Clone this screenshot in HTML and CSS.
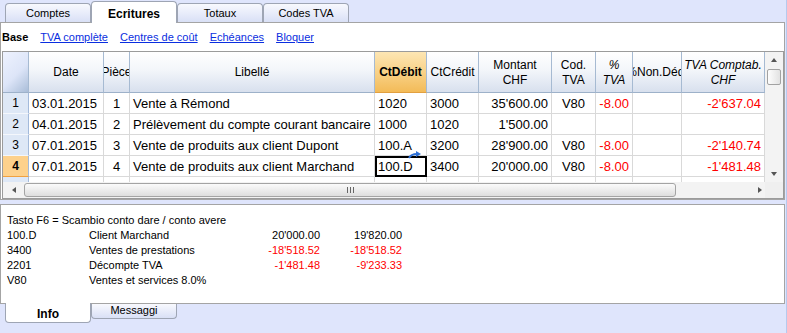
FILE: index.html
```html
<!DOCTYPE html>
<html lang="fr">
<head>
<meta charset="utf-8">
<link rel="stylesheet" href="styles.css">
</head>
<body>
<div class="tabs top">
  <div class="tab">Comptes</div>
  <div class="tab active">Ecritures</div>
  <div class="tab">Totaux</div>
  <div class="tab">Codes TVA</div>
</div>
<div class="panel main">
  <div class="links">
    <b>Base</b><a>TVA complète</a><a>Centres de coût</a><a>Echéances</a><a>Bloquer</a>
  </div>
  <div class="frame">
    <div class="upper">
      <div class="table">
        <div class="row head">
          <div class="h corner-h"></div>
          <div class="h"><span>Date</span></div>
          <div class="h"><span>Pièce</span></div>
          <div class="h"><span>Libellé</span></div>
          <div class="h sel"><span>CtDébit</span></div>
          <div class="h"><span>CtCrédit</span></div>
          <div class="h"><span>Montant<br>CHF</span></div>
          <div class="h"><span>Cod.<br>TVA</span></div>
          <div class="h it"><span>%<br>TVA</span></div>
          <div class="h"><span>%Non.Déd.</span></div>
          <div class="h it"><span>TVA Comptab.<br>CHF</span></div>
        </div>
        <div class="row">
          <div class="c n">1</div><div class="c">03.01.2015</div><div class="c ctr">1</div><div class="c">Vente à Rémond</div><div class="c">1020</div><div class="c">3000</div><div class="c r">35'600.00</div><div class="c ctr">V80</div><div class="c r red">-8.00</div><div class="c"></div><div class="c r red">-2'637.04</div>
        </div>
        <div class="row">
          <div class="c n">2</div><div class="c">04.01.2015</div><div class="c ctr">2</div><div class="c">Prélèvement du compte courant bancaire</div><div class="c">1000</div><div class="c">1020</div><div class="c r">1'500.00</div><div class="c ctr"></div><div class="c r red"></div><div class="c"></div><div class="c r red"></div>
        </div>
        <div class="row">
          <div class="c n">3</div><div class="c">07.01.2015</div><div class="c ctr">3</div><div class="c">Vente de produits aux client Dupont</div><div class="c">100.A</div><div class="c">3200</div><div class="c r">28'900.00</div><div class="c ctr">V80</div><div class="c r red">-8.00</div><div class="c"></div><div class="c r red">-2'140.74</div>
        </div>
        <div class="row">
          <div class="c n cur">4</div><div class="c">07.01.2015</div><div class="c ctr">4</div><div class="c">Vente de produits aux client Marchand</div><div class="c active-cell">100.D<svg class="swap" width="14" height="8" viewBox="0 0 14 8"><path d="M1 7 Q3 3 9 3" stroke="#2c6fd6" stroke-width="2" fill="none"/><path d="M8 0 L13 3 L8 6 Z" fill="#2c6fd6"/></svg></div><div class="c">3400</div><div class="c r">20'000.00</div><div class="c ctr">V80</div><div class="c r red">-8.00</div><div class="c"></div><div class="c r red">-1'481.48</div>
        </div>
        <div class="row partial">
          <div class="c n"></div><div class="c"></div><div class="c"></div><div class="c"></div><div class="c"></div><div class="c"></div><div class="c"></div><div class="c"></div><div class="c"></div><div class="c"></div><div class="c"></div>
        </div>
      </div>
      <div class="vscroll">
        <div class="arr up"></div>
        <div class="vthumb"></div>
        <div class="vspace"></div>
        <div class="arr down"></div>
      </div>
    </div>
    <div class="lower">
      <div class="hscroll">
        <div class="arr left"></div>
        <div class="hthumb"><span class="grip"></span></div>
        <div class="arr right"></div>
      </div>
      <div class="sq"></div>
    </div>
  </div>
</div>
<div class="panel info">
  <div class="iline">Tasto F6 = Scambio conto dare / conto avere</div>
  <div class="iline"><span class="k">100.D</span><span class="d">Client Marchand</span><span class="a">20'000.00</span><span class="a">19'820.00</span></div>
  <div class="iline"><span class="k">3400</span><span class="d">Ventes de prestations</span><span class="a red">-18'518.52</span><span class="a red">-18'518.52</span></div>
  <div class="iline"><span class="k">2201</span><span class="d">Décompte TVA</span><span class="a red">-1'481.48</span><span class="a red">-9'233.33</span></div>
  <div class="iline"><span class="k">V80</span><span class="d">Ventes et services 8.0%</span></div>
</div>
<div class="tabs bottom">
  <div class="tab active">Info</div>
  <div class="tab">Messaggi</div>
</div>
</body>
</html>
```

FILE: styles.css
```css
html, body { margin: 0; padding: 0; }
body {
  width: 786px;
  height: 333px;
  background: #dfe5fc;
  border-right: 1px solid #b5caee;
  font-family: "Liberation Sans", Arial, sans-serif;
  font-size: 11px;
  color: #000;
  overflow: hidden;
}

/* tabs */
.tabs { display: flex; padding-left: 5px; }
.tabs.top { height: 22px; align-items: flex-end; }
.tab {
  width: 86px;
  box-sizing: border-box;
  text-align: center;
  font-size: 11px;
  border: 1px solid #9ea5b4;
  background: linear-gradient(#f8f9fe, #d9e0f6);
  color: #000;
}
.tabs.top .tab {
  height: 19px;
  line-height: 19px;
  border-bottom: none;
  border-radius: 4px 4px 0 0;
}
.tabs.top .tab.active {
  height: 22px;
  line-height: 24px;
  margin-bottom: -1px;
  background: #fff;
  font-weight: bold;
  font-size: 12px;
  position: relative;
  z-index: 1;
}
.tabs.bottom { align-items: flex-start; }
.tabs.bottom .tab {
  height: 15px;
  line-height: 13px;
  border-top: none;
  border-radius: 0 0 4px 4px;
}
.tabs.bottom .tab.active {
  height: 20px;
  line-height: 22px;
  margin-top: -1px;
  background: #fff;
  font-weight: bold;
  font-size: 12px;
  position: relative;
  z-index: 1;
}

/* panels */
.panel {
  width: 785px;
  box-sizing: border-box;
  border: 1px solid #a4a4a4;
  background: #fff;
}
.main { height: 178px; }
.links {
  height: 28px;
  line-height: 28px;
  padding-left: 1px;
  display: flex;
  gap: 12px;
  white-space: nowrap;
}
.links b { font-weight: bold; }
.links a { color: #0a2ee0; text-decoration: underline; }

.frame {
  margin-left: 1px;
  width: 782px;
  height: 148px;
  box-sizing: border-box;
  border: 1px solid #9b9b9b;
  display: flex;
  flex-direction: column;
}
.upper { display: flex; height: 130px; }
.table { width: 762px; overflow: hidden; }
.row {
  display: grid;
  grid-template-columns: 26px 75px 26px 245px 52px 52px 73px 44px 37px 49px 83px;
}
.h {
  box-sizing: border-box;
  height: 41px;
  border-right: 1px solid #a6bad2;
  border-bottom: 1px solid #9db1c9;
  background: linear-gradient(#ffffff 0%, #f3f6fa 45%, #d8e0ee 100%);
  display: flex;
  align-items: center;
  justify-content: center;
  overflow: hidden;
  text-align: center;
  font-size: 12px;
  line-height: 15px;
  white-space: nowrap;
  padding-top: 1px;
}
.h span { flex: none; }
.h.it { font-style: italic; }
.h.sel {
  background: linear-gradient(#fde6b4 0%, #f9d48c 45%, #f3bb58 100%);
  border-bottom-color: #e2a040;
  font-weight: bold;
}
.h.corner-h {
  background: linear-gradient(135deg, #eef2fe 0%, #dde5f8 55%, #a9bdd8 100%);
}

.c {
  box-sizing: border-box;
  height: 21px;
  border-right: 1px solid #d9d9d9;
  border-bottom: 1px solid #d9d9d9;
  padding: 0 3px;
  font-size: 13px;
  line-height: 21px;
  white-space: nowrap;
  overflow: hidden;
}
.c.r { text-align: right; }
.c.ctr { text-align: center; }
.red { color: #ff0000; }
.c.n {
  background: #dee8f6;
  border-right-color: #a3badb;
  border-bottom-color: #f4f7fc;
  text-align: center;
  font-size: 12px;
  padding: 0;
}
.c.n.cur {
  background: #fdd18c;
  font-weight: bold;
  border-bottom: 1px solid #f0a140;
}
.row.partial .c { height: 5px; border-bottom: none; }
.active-cell {
  position: relative;
  overflow: visible;
  outline: 2px solid #000;
  outline-offset: -2px;
}
.swap { position: absolute; left: 33px; top: -5px; }

/* scrollbars */
.vscroll {
  width: 18px;
  background: #f3f3f3;
  display: flex;
  flex-direction: column;
  align-items: center;
}
.arr { width: 0; height: 0; border-style: solid; border-color: transparent; }
.arr.up { margin-top: 6px; border-width: 0 3px 4px 3px; border-bottom-color: #555; }
.arr.down { margin-bottom: 6px; border-width: 4px 3px 0 3px; border-top-color: #555; }
.vthumb {
  margin-top: 7px;
  width: 14px;
  height: 16px;
  box-sizing: border-box;
  border: 1px solid #a2a2a2;
  border-radius: 2px;
  background: linear-gradient(90deg, #fdfdfd, #e2e2e2);
}
.vspace { flex: 1; }

.lower { display: flex; height: 16px; }
.hscroll {
  width: 762px;
  background: #f3f3f3;
  display: flex;
  align-items: center;
}
.arr.left { margin-left: 9px; border-width: 3px 4px 3px 0; border-right-color: #555; }
.arr.right { margin-left: 82px; border-width: 3px 0 3px 4px; border-left-color: #555; }
.hthumb {
  margin-left: 8px;
  width: 652px;
  height: 14px;
  box-sizing: border-box;
  border: 1px solid #a4a4a4;
  border-radius: 3px;
  background: linear-gradient(#fbfbfb, #dedede);
  display: flex;
  align-items: center;
  justify-content: center;
}
.grip {
  width: 7px;
  height: 6px;
  background: repeating-linear-gradient(90deg, #666 0 1px, transparent 1px 3px);
}
.sq { flex: 1; background: #efefef; }

/* info panel */
.info {
  margin-top: 4px;
  height: 100px;
  padding: 8px 0 0 6px;
}
.iline {
  display: flex;
  height: 15px;
  line-height: 15px;
  white-space: nowrap;
}
.iline .k { width: 82px; flex: none; }
.iline .d { width: 150px; flex: none; }
.iline .a { width: 82px; flex: none; text-align: right; }
.iline .a + .a { width: 82px; }
.iline .d + .a { width: 81px; }
```
